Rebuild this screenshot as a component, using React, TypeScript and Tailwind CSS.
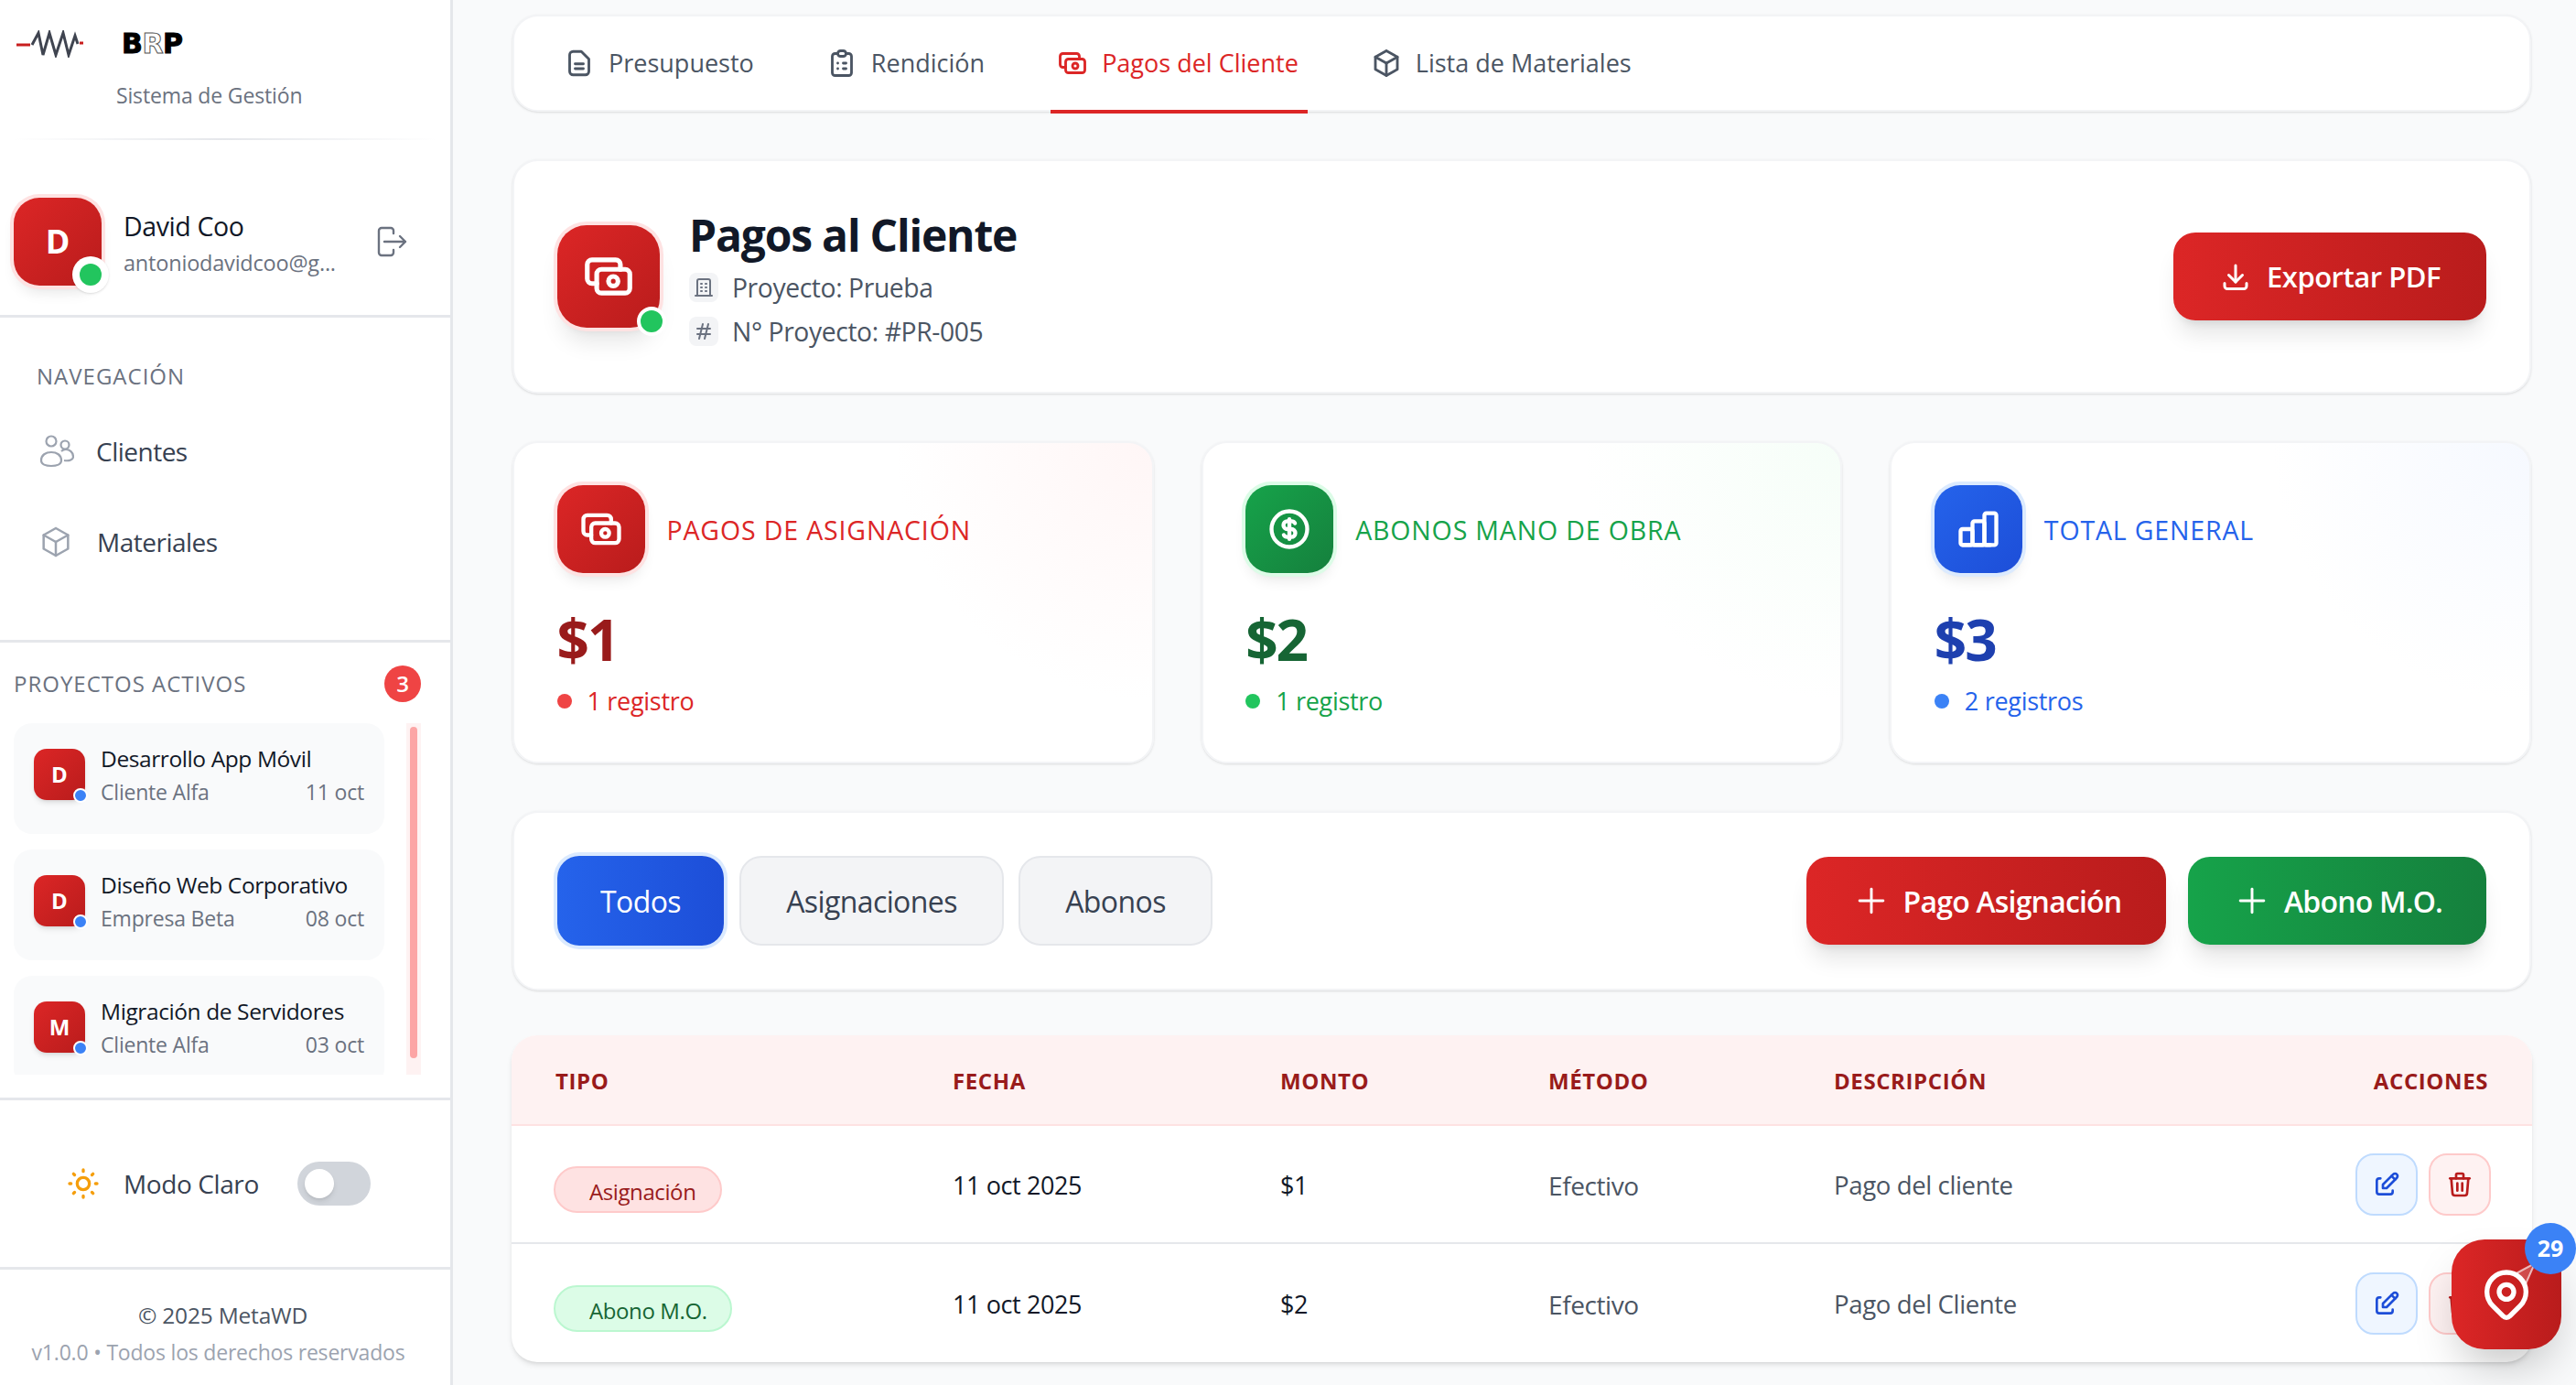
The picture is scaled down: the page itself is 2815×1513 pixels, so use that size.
import {
  TbBox,
  TbBuilding,
  TbCash,
  TbChartBarPopular,
  TbClipboardList,
  TbCoin,
  TbDownload,
  TbEdit,
  TbHash,
  TbMapPin,
  TbPlus,
  TbSun,
  TbTrash,
} from "react-icons/tb";

const projects = [
  { letter: "D", name: "Desarrollo App Móvil", client: "Cliente Alfa", date: "11 oct" },
  { letter: "D", name: "Diseño Web Corporativo", client: "Empresa Beta", date: "08 oct" },
  { letter: "M", name: "Migración de Servidores", client: "Cliente Alfa", date: "03 oct" },
];

const ResistorLogo = () => (
  <svg width="76" height="30" viewBox="0 0 76 30" fill="none">
    <path d="M0 16H15" stroke="#c81e1e" strokeWidth="3" />
    <path d="M17 16L24 3L29 27L36 3L43 27L51 3L57 27L64 6L67 15" stroke="#3f4450" strokeWidth="3" />
    <path d="M69 14H73" stroke="#c81e1e" strokeWidth="3" />
  </svg>
);

const LogoutIcon = () => (
  <svg width="34" height="34" viewBox="0 0 34 34" fill="none" stroke="#6b7280" strokeWidth="2.4" strokeLinecap="round" strokeLinejoin="round">
    <path d="M19 8V5a3 3 0 0 0-3-3H6a3 3 0 0 0-3 3v24a3 3 0 0 0 3 3h10a3 3 0 0 0 3-3v-3" />
    <path d="M9 17h23M26 11l6 6-6 6" />
  </svg>
);

const UsersIcon = () => (
  <svg width="38" height="36" viewBox="0 0 38 36" fill="none" stroke="#9ca3af" strokeWidth="2.2">
    <circle cx="13" cy="7" r="5.5" />
    <circle cx="28" cy="11" r="4.5" />
    <path d="M2 28c0-6 5-9 11-9s11 3 11 9c0 4-5 6-11 6S2 32 2 28z" />
    <path d="M24 18c1-1 3-2 5-2 4 0 8 3 8 8 0 3-4 5-10 4" />
  </svg>
);

const FileIcon = ({ size, strokeWidth }: { size: number; strokeWidth: number }) => (
  <svg width={size} height={size} viewBox="0 0 24 24" fill="none" stroke="currentColor" strokeWidth={strokeWidth} strokeLinecap="round" strokeLinejoin="round">
    <path d="M7.5 3.5h6L19 9v9a2.5 2.5 0 0 1-2.5 2.5h-9A2.5 2.5 0 0 1 5 18V6a2.5 2.5 0 0 1 2.5-2.5z" />
    <path d="M9 12.5h6M9 16h6" />
  </svg>
);

const Sidebar = () => (
  <aside className="w-[495px] h-[1513px] shrink-0 bg-white border-r-[3px] border-[#e5e7eb] flex flex-col">
    <div className="h-[344px] flex flex-col shrink-0">
      <div className="flex items-center h-[94px] pl-[18px] pt-[2px]">
        <ResistorLogo />
        <span className="ml-[39px] font-['DejaVu_Sans'] font-bold text-[30px] leading-none text-black [-webkit-text-stroke:1px_black] tracking-[-0.5px]">
          B<span className="text-white [-webkit-text-stroke:1px_#555]">R</span>P
        </span>
      </div>
      <p className="pl-[127px] text-[23px] leading-[20px] text-[#6b7280] tracking-[-0.15px]">Sistema de Gestión</p>
      <div className="mt-[37px] mx-[15px] h-[2px] bg-gradient-to-r from-white via-[#e5e7eb] to-white" />
      <div className="flex items-center pl-[15px] mt-[63px]">
        <div className="relative w-[96px] h-[96px] rounded-[28px] bg-gradient-to-br from-[#dc2626] to-[#b91c1c] ring-4 ring-[#fee2e2] shadow-lg flex items-center justify-center">
          <span className="text-white font-bold text-[36px]">D</span>
          <span className="absolute -right-[8px] -bottom-[8px] w-[40px] h-[40px] rounded-full bg-white shadow flex items-center justify-center">
            <span className="w-[24px] h-[24px] rounded-full bg-[#22c55e]" />
          </span>
        </div>
        <div className="ml-[24px] w-[276px] pt-[6px]">
          <p className="text-[28.5px] leading-[36px] font-medium text-[#111827] tracking-[-0.4px]">David Coo</p>
          <p className="text-[23.5px] leading-[36px] text-[#6b7280] mt-[4px] tracking-[-0.2px]">antoniodavidcoo@g...</p>
        </div>
        <LogoutIcon />
      </div>
    </div>
    <div className="h-[355px] shrink-0 border-t-[3px] border-[#e5e7eb] pt-[50px] pl-[40px]">
      <p className="text-[24px] leading-[28px] font-medium text-[#6b7280] tracking-[1px]">NAVEGACIÓN</p>
      <div className="flex items-center mt-[50px] h-[36px] pl-[3px]">
        <UsersIcon />
        <span className="ml-[24px] text-[28px] font-medium text-[#374151] tracking-[-0.5px]">Clientes</span>
      </div>
      <div className="flex items-center mt-[63px] h-[36px] pl-[1px]">
        <TbBox size={40} color="#9ca3af" strokeWidth={1.5} />
        <span className="ml-[25px] text-[28px] font-medium text-[#374151] tracking-[-0.5px]">Materiales</span>
      </div>
    </div>
    <div className="h-[500px] shrink-0 border-t-[3px] border-[#e5e7eb] pl-[15px] pr-[32px] pt-[25px]">
      <div className="flex items-center justify-between h-[40px]">
        <span className="text-[24px] font-medium text-[#6b7280] tracking-[1px]">PROYECTOS ACTIVOS</span>
        <span className="w-[40px] h-[40px] rounded-full bg-[#ef4444] text-white font-semibold text-[24px] flex items-center justify-center">3</span>
      </div>
      <div className="flex gap-[24px] mt-[23px] h-[384px]">
        <div className="w-[406px] h-[384px] overflow-hidden flex flex-col gap-[17px]">
          {projects.map((p) => (
            <div key={p.name} className="bg-[#f9fafb] rounded-[20px] h-[121px] shrink-0 pl-[22px] pr-[22px] pt-[28px] flex">
              <div className="relative w-[56px] h-[56px] shrink-0 rounded-[14px] bg-gradient-to-br from-[#dc2626] to-[#b91c1c] shadow-md flex items-center justify-center">
                <span className="text-white font-bold text-[24px]">{p.letter}</span>
                <span className="absolute -right-[3px] -bottom-[3px] w-[16px] h-[16px] rounded-full bg-[#3b82f6] border-2 border-white" />
              </div>
              <div className="ml-[17px] flex-1 -mt-[7px]">
                <p className="text-[24.5px] leading-[36px] font-medium text-[#111827] tracking-[-0.4px] whitespace-nowrap">{p.name}</p>
                <div className="flex justify-between text-[23px] leading-[36px] text-[#6b7280] tracking-[-0.2px]">
                  <span>{p.client}</span>
                  <span>{p.date}</span>
                </div>
              </div>
            </div>
          ))}
        </div>
        <div className="w-[16px] h-[384px] bg-[#fef2f2] pt-[4px] px-[4px]">
          <div className="w-[8px] h-[362px] rounded-full bg-[#fca5a5]" />
        </div>
      </div>
    </div>
    <div className="h-[185px] shrink-0 border-t-[3px] border-[#e5e7eb] flex items-center pl-[71px]">
      <TbSun size={40} color="#f59e0b" strokeWidth={2} />
      <span className="ml-[24px] text-[28px] font-medium text-[#374151] tracking-[-0.4px]">Modo Claro</span>
      <div className="ml-[42px] w-[80px] h-[48px] rounded-full bg-[#d1d5db] flex items-center pl-[8px]">
        <span className="w-[32px] h-[32px] rounded-full bg-white shadow-md" />
      </div>
    </div>
    <div className="flex-1 border-t-[3px] border-[#e5e7eb] flex flex-col items-center pt-[32px] pr-[2px]">
      <p className="text-[24.5px] leading-[36px] font-medium text-[#4b5563] tracking-[-0.2px] mr-[3px]">© 2025 MetaWD</p>
      <p className="text-[23px] leading-[36px] mt-[4px] mr-[13px] text-[#9ca3af] tracking-[-0.2px] whitespace-nowrap">v1.0.0 • Todos los derechos reservados</p>
    </div>
  </aside>
);

const tabs = [
  { label: "Presupuesto", Icon: FileIcon },
  { label: "Rendición", Icon: TbClipboardList },
  { label: "Pagos del Cliente", Icon: TbCash, active: true },
  { label: "Lista de Materiales", Icon: TbBox },
];

const TabBar = () => (
  <div className="h-[106px] bg-white rounded-[28px] border-2 border-[#f3f4f6] shadow-sm flex pl-[47px] gap-[62px] shrink-0">
    {tabs.map(({ label, Icon, active }) => (
      <div
        key={label}
        className={`h-[106px] flex items-center gap-[14px] pl-[6px] pr-[10px] border-b-4 ${active ? "border-[#dc2626] text-[#dc2626]" : "border-transparent text-[#4b5563]"}`}
      >
        <Icon size={36} strokeWidth={1.9} />
        <span className="text-[27px] font-medium whitespace-nowrap">{label}</span>
      </div>
    ))}
  </div>
);

const Header = () => (
  <div className="h-[256px] bg-white rounded-[28px] border-2 border-[#f3f4f6] shadow-sm flex items-center justify-between pl-[47px] pr-[47px] shrink-0">
    <div className="flex items-center">
      <div className="relative w-[112px] h-[112px] rounded-[32px] bg-gradient-to-br from-[#dc2626] to-[#b91c1c] ring-4 ring-[#fee2e2] shadow-xl flex items-center justify-center">
        <TbCash size={62} color="white" strokeWidth={2} />
        <span className="absolute -right-[7px] -bottom-[9px] w-[32px] h-[32px] rounded-full bg-[#22c55e] border-4 border-white" />
      </div>
      <div className="ml-[32px] pt-[8px]">
        <h1 className="text-[48px] leading-[62px] font-bold text-[#111827] tracking-[-1.2px] -mt-[8px]">Pagos al Cliente</h1>
        <div className="flex items-center mt-[10px] h-[32px] text-[28.3px] text-[#4b5563] tracking-[-0.4px]">
          <span className="w-[32px] h-[32px] rounded-[8px] bg-[#f3f4f6] flex items-center justify-center">
            <TbBuilding size={24} color="#6b7280" />
          </span>
          <span className="ml-[15px]">Proyecto: Prueba</span>
        </div>
        <div className="flex items-center mt-[16px] h-[32px] text-[28.3px] text-[#4b5563] tracking-[-0.4px]">
          <span className="w-[32px] h-[32px] rounded-[8px] bg-[#f3f4f6] flex items-center justify-center">
            <TbHash size={24} color="#6b7280" />
          </span>
          <span className="ml-[15px]">N° Proyecto: #PR-005</span>
        </div>
      </div>
    </div>
    <button className="w-[342px] h-[96px] rounded-[24px] bg-gradient-to-r from-[#dc2626] to-[#b91c1c] text-white shadow-xl flex items-center justify-center gap-[16px]">
      <TbDownload size={36} strokeWidth={2} />
      <span className="text-[31px] font-semibold tracking-[-0.5px]">Exportar PDF</span>
    </button>
  </div>
);

const stats = [
  {
    Icon: TbCash,
    label: "PAGOS DE ASIGNACIÓN",
    value: "$1",
    note: "1 registro",
    card: "bg-[radial-gradient(circle_at_100%_0%,#fff6f6,#ffffff_36%)]",
    tile: "from-[#dc2626] to-[#b91c1c] ring-[#fee2e2]",
    text: "text-[#dc2626]",
    val: "text-[#991b1b]",
    dot: "bg-[#ef4444]",
  },
  {
    Icon: TbCoin,
    label: "ABONOS MANO DE OBRA",
    value: "$2",
    note: "1 registro",
    card: "bg-[radial-gradient(circle_at_100%_0%,#f6fef8,#ffffff_36%)]",
    tile: "from-[#16a34a] to-[#15803d] ring-[#dcfce7]",
    text: "text-[#16a34a]",
    val: "text-[#166534]",
    dot: "bg-[#22c55e]",
  },
  {
    Icon: TbChartBarPopular,
    label: "TOTAL GENERAL",
    value: "$3",
    note: "2 registros",
    card: "bg-[radial-gradient(circle_at_100%_0%,#f6f9ff,#ffffff_36%)]",
    tile: "from-[#2563eb] to-[#1d4ed8] ring-[#dbeafe]",
    text: "text-[#2563eb]",
    val: "text-[#1e40af]",
    dot: "bg-[#3b82f6]",
  },
];

const StatCards = () => (
  <div className="grid grid-cols-3 gap-[52px] h-[352px] shrink-0">
    {stats.map(({ Icon, label, value, note, card, tile, text, val, dot }) => (
      <div key={label} className={`rounded-[28px] border-2 border-[#f3f4f6] shadow-sm pl-[46.5px] pt-[46px] ${card}`}>
        <div className="flex items-center">
          <div className={`w-[96px] h-[96px] rounded-[28px] bg-gradient-to-br ring-4 shadow-lg flex items-center justify-center ${tile}`}>
            <Icon size={52} color="white" strokeWidth={2} />
          </div>
          <span className={`ml-[24px] text-[28.5px] font-medium tracking-[0.85px] mt-[2px] ${text}`}>{label}</span>
        </div>
        <p className={`mt-[30px] text-[62px] leading-[84px] font-bold tracking-[-2px] ${val}`}>{value}</p>
        <div className="flex items-center mt-[8px] h-[36px]">
          <span className={`w-[16px] h-[16px] rounded-full ${dot}`} />
          <span className={`ml-[17px] text-[27px] tracking-[-0.3px] ${text}`}>{note}</span>
        </div>
      </div>
    ))}
  </div>
);

const Filters = () => (
  <div className="h-[196px] bg-white rounded-[28px] border-2 border-[#f3f4f6] shadow-sm flex items-center justify-between pl-[47px] pr-[47px] shrink-0">
    <div className="flex items-center">
      <button className="w-[182px] h-[98px] rounded-[24px] bg-gradient-to-r from-[#2563eb] to-[#1d4ed8] ring-4 ring-[#dbeafe] text-white text-[32px] font-medium tracking-[-0.6px] pt-[2px]">Todos</button>
      <button className="ml-[17px] w-[289px] h-[98px] rounded-[24px] bg-[#f3f4f6] border-2 border-[#e5e7eb] text-[#374151] text-[32px] font-medium tracking-[-0.6px] pt-[2px]">Asignaciones</button>
      <button className="ml-[16px] w-[212px] h-[98px] rounded-[24px] bg-[#f3f4f6] border-2 border-[#e5e7eb] text-[#374151] text-[32px] font-medium tracking-[-0.6px] pt-[2px]">Abonos</button>
    </div>
    <div className="flex items-center gap-[24px]">
      <button className="w-[393px] h-[96px] rounded-[24px] bg-gradient-to-r from-[#dc2626] to-[#b91c1c] shadow-xl text-white flex items-center justify-center gap-[13px]">
        <TbPlus size={44} strokeWidth={1.6} />
        <span className="text-[32px] font-semibold tracking-[-0.8px] pt-[2px]">Pago Asignación</span>
      </button>
      <button className="w-[326px] h-[96px] rounded-[24px] bg-gradient-to-r from-[#16a34a] to-[#15803d] shadow-xl text-white flex items-center justify-center gap-[13px]">
        <TbPlus size={44} strokeWidth={1.6} />
        <span className="text-[32px] font-semibold tracking-[-0.8px] pt-[2px]">Abono M.O.</span>
      </button>
    </div>
  </div>
);

const rows = [
  { type: "Asignación", badge: "w-[184px] bg-[#fee2e2] border-[#fecaca] text-[#991b1b]", desc: "Pago del cliente", amount: "$1" },
  { type: "Abono M.O.", badge: "w-[195px] bg-[#dcfce7] border-[#bbf7d0] text-[#166534]", desc: "Pago del Cliente", amount: "$2" },
];

const columns = "grid grid-cols-[434px_358px_293px_312px_1fr_auto] items-center pl-[48px] pr-[48px]";

const PaymentsTable = () => (
  <div className="-mx-[1px] -mt-[3px] h-[357px] bg-white rounded-[28px] shadow-md overflow-hidden shrink-0">
    <div className={`${columns} h-[99px] pt-[2px] bg-[#fef2f2] border-b-2 border-[#fee2e2] text-[24px] font-bold text-[#991b1b] tracking-[0.6px]`}>
      <span>TIPO</span>
      <span>FECHA</span>
      <span>MONTO</span>
      <span>MÉTODO</span>
      <span>DESCRIPCIÓN</span>
      <span>ACCIONES</span>
    </div>
    {rows.map((r, i) => (
      <div key={r.type} className={`${columns} h-[129px] ${i === 0 ? "border-b-2 border-[#e5e7eb]" : ""}`}>
        <span className={`-ml-[2px] h-[51px] rounded-full border-2 pl-[37px] pt-[4px] flex items-center text-[24px] font-medium tracking-[-0.4px] mt-[12px] ${r.badge}`}>{r.type}</span>
        <span className="text-[27px] font-medium text-[#111827] tracking-[-0.4px] mt-[4px]">11 oct 2025</span>
        <span className="text-[27px] font-medium text-[#111827] tracking-[-0.4px] mt-[4px]">{r.amount}</span>
        <span className="text-[28px] text-[#4b5563] tracking-[-0.4px] mt-[2px]">Efectivo</span>
        <span className="text-[27.6px] text-[#4b5563] tracking-[-0.4px] mt-[2px]">{r.desc}</span>
        <div className="flex gap-[12px] justify-end -mr-[3px]">
          <span className="w-[68px] h-[68px] rounded-[20px] bg-[#eff6ff] border-2 border-[#bfdbfe] flex items-center justify-center">
            <TbEdit size={32} color="#1d4ed8" strokeWidth={2} />
          </span>
          <span className="w-[68px] h-[68px] rounded-[20px] bg-[#fef2f2] border-2 border-[#fecaca] flex items-center justify-center">
            <TbTrash size={32} color="#b91c1c" strokeWidth={2} />
          </span>
        </div>
      </div>
    ))}
  </div>
);

const MapButton = () => (
  <div className="absolute left-[2679px] top-[1354px] w-[120px] h-[120px] rounded-[36px] bg-gradient-to-r from-[#dc2626] to-[#b91c1c] shadow-2xl flex items-center justify-center">
    <TbMapPin size={64} color="white" strokeWidth={2} />
    <svg className="absolute left-[50px] top-[20px]" width="50" height="50" viewBox="0 0 50 50" fill="white" fillOpacity="0.2" stroke="white" strokeOpacity="0.65" strokeWidth="2">
      <path d="M19 18L41 6L29 33" />
    </svg>
    <span className="absolute left-[80px] -top-[18px] w-[56px] h-[56px] rounded-full bg-[#3b82f6] text-white font-bold text-[25px] flex items-center justify-center">29</span>
  </div>
);

export default function App() {
  return (
    <div className="relative w-[2815px] h-[1513px] overflow-hidden flex bg-[#f9fafb] font-['Open_Sans',sans-serif]">
      <Sidebar />
      <main className="flex-1 flex flex-col gap-[52px] pt-[16px] pl-[65px] pr-[49px]">
        <TabBar />
        <Header />
        <StatCards />
        <Filters />
        <PaymentsTable />
      </main>
      <MapButton />
    </div>
  );
}
